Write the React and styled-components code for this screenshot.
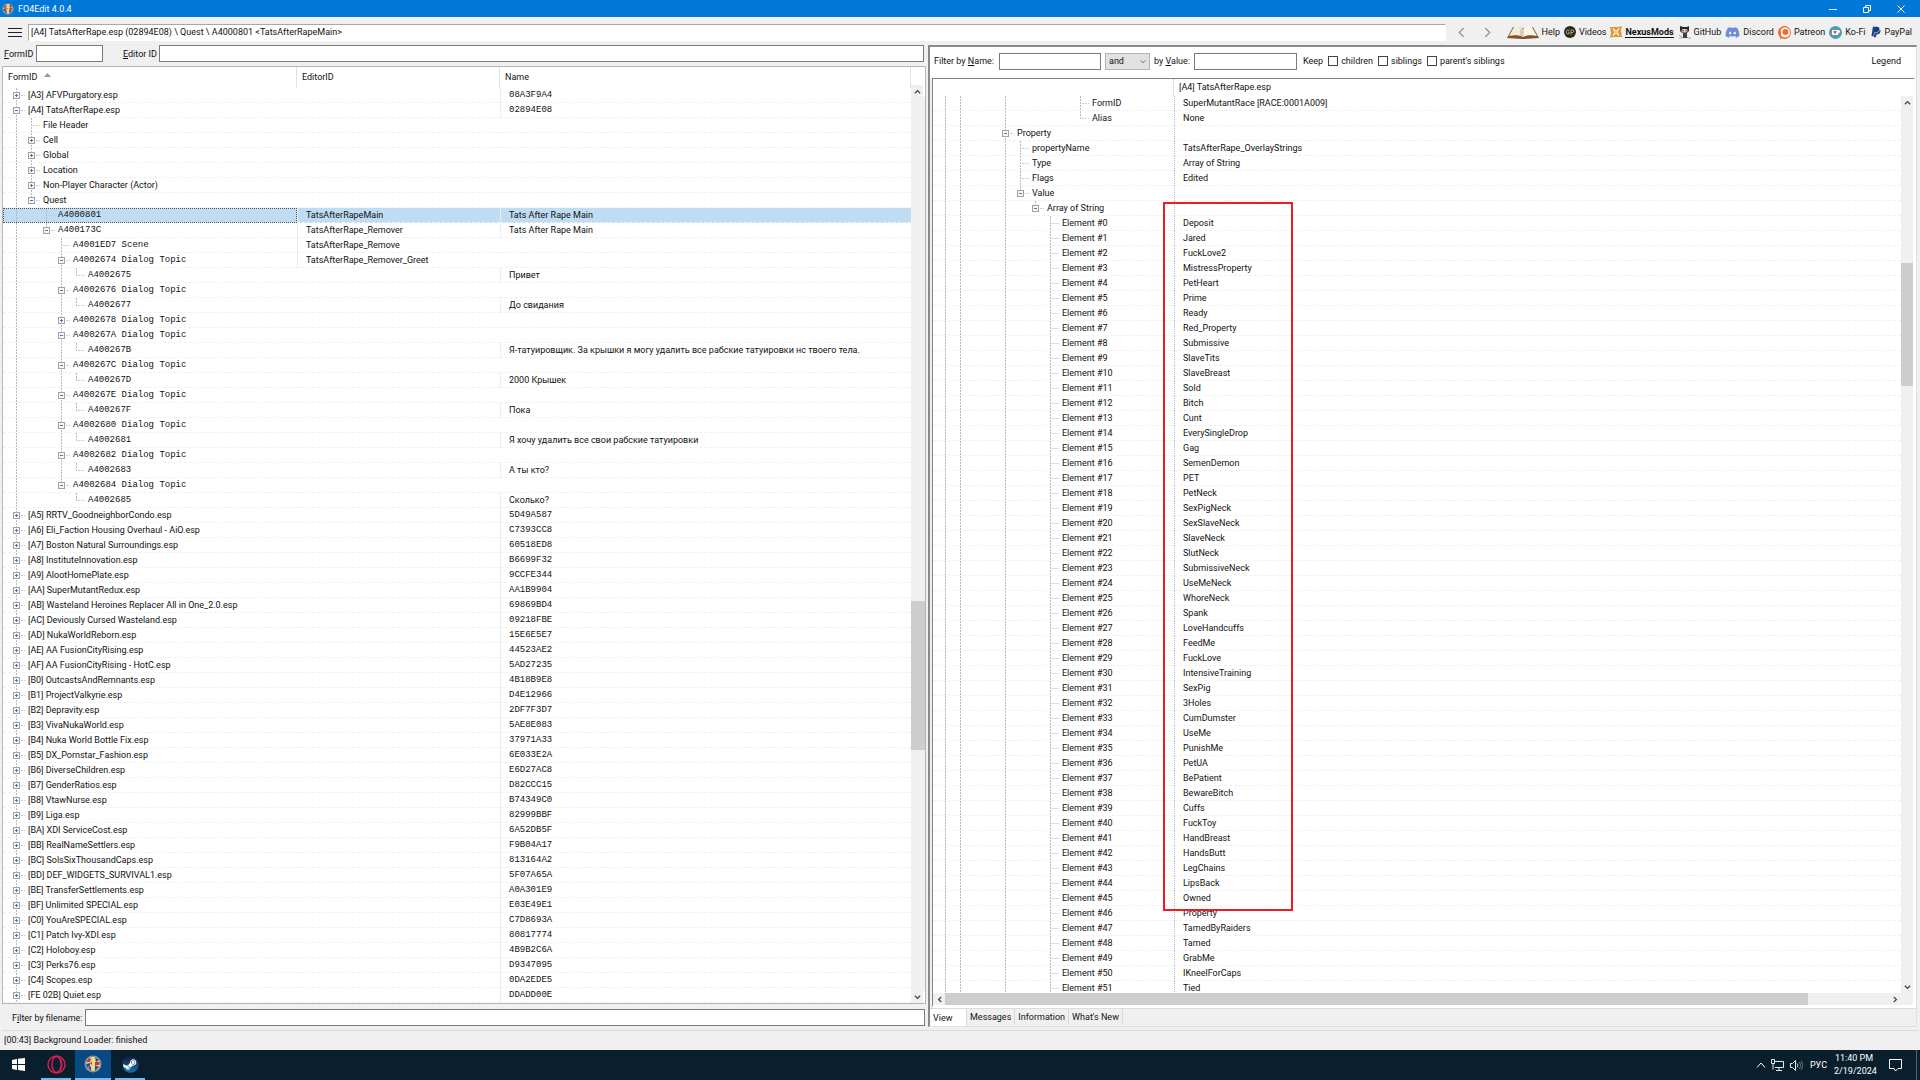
import { useState } from "react";
import styled, { createGlobalStyle } from "styled-components";
import { FaDiscord, FaPaypal, FaSteam } from "react-icons/fa";

const GlobalStyle = createGlobalStyle`
    * {
        box-sizing: border-box;
    }
    body {
        margin: 0;
        overflow: hidden;
        background: #f0f0f0;
        color: #111;
        font: 9px/14px Roboto, "Noto Sans", sans-serif;
    }
    button, input, select {
        font: inherit;
        color: inherit;
    }
    button {
        padding: 0;
        border: none;
        background: none;
    }
    svg {
        display: block;
        flex: none;
    }
`;

const Window = styled.div`
    height: 100vh;
    display: flex;
    flex-direction: column;
    background: #f0f0f0;
`;
const TitleBar = styled.header`
    display: flex;
    align-items: center;
    height: 17px;
    padding: 0 15px 0 2px;
    gap: 4px;
    background: #0078d7;
    color: #fff;
`;
const Title = styled.h1`
    flex: 1;
    margin: 0;
    font-size: 9px;
    font-weight: 400;
`;
const WindowButtons = styled.div`
    display: flex;
    gap: 26px;
`;
const Toolbar = styled.div`
    display: flex;
    align-items: center;
    height: 26px;
    padding: 4px 8px 0 8px;
`;
const PathInput = styled.input`
    flex: 1;
    min-width: 0;
    height: 17px;
    margin-left: 6px;
    padding: 0 2px;
    border: 1px solid #fff;
    border-top-color: #a8a8a8;
    border-left-color: #a8a8a8;
    background: #fff;
`;
const NavButtons = styled.div`
    display: flex;
    gap: 17px;
    padding: 0 15px 0 11px;
`;
const Links = styled.nav`
    display: flex;
    align-items: center;
    gap: 4px;
`;
const ToolLink = styled.a`
    display: flex;
    align-items: center;
    gap: 3px;
    color: #111;
    text-decoration: none;
    font-weight: ${props => (props.$current ? 700 : 400)};

    span {
        border-bottom: 1px solid ${props => (props.$current ? "#111" : "transparent")};
        line-height: 10px;
    }
`;

const Main = styled.main`
    flex: 1;
    min-height: 0;
    display: grid;
    grid-template-columns: 928fr 992fr;
`;
const LeftPane = styled.section`
    display: flex;
    flex-direction: column;
    min-width: 0;
    min-height: 0;
    padding: 2px 2px 0;
`;
const RightPane = styled.section`
    display: flex;
    flex-direction: column;
    min-width: 0;
    min-height: 0;
    margin: 2px 3px 3px 0;
    border: 1px solid #e0e0e0;
    border-top: 2px solid #8a8a8a;
    border-left: 2px solid #8a8a8a;
`;
const IdRow = styled.div`
    display: flex;
    align-items: center;
    height: 17px;
    margin-bottom: 4px;
    padding: 0 2px;
`;
const FieldLabel = styled.label`
    flex: none;
    width: ${props => props.$width}px;
    white-space: nowrap;
`;
const TextInput = styled.input`
    width: ${props => props.$width ? props.$width + "px" : "auto"};
    flex: ${props => (props.$width ? "none" : 1)};
    min-width: 0;
    height: 17px;
    margin-right: ${props => props.$after || 0}px;
    padding: 0 3px;
    border: 1px solid #7a7a7a;
    background: #fff;
`;
const FilenameRow = styled.div`
    display: flex;
    align-items: center;
    padding: 5px 1px 4px 10px;
`;
const FilterRow = styled.div`
    display: flex;
    align-items: center;
    height: 31px;
    padding: 0 15px 3px 4px;
    background: #fff;
`;
const Select = styled.select`
    width: 45px;
    height: 17px;
    margin-right: 4px;
    padding: 0 3px;
    border: 1px solid #b4b4b4;
    background: #e1e1e1;
    appearance: none;
`;
const SelectBox = styled.div`
    position: relative;

    svg {
        position: absolute;
        right: 8px;
        top: 6px;
        pointer-events: none;
    }
`;
const CheckLabel = styled.label`
    display: flex;
    align-items: center;
    gap: 3px;
    margin-left: 5px;
`;
const Check = styled.input`
    appearance: none;
    width: 10px;
    height: 10px;
    margin: 0;
    border: 1px solid #444;
    background: #fff;
`;
const Legend = styled.button`
    margin-left: auto;
`;

const GridBox = styled.div`
    flex: 1;
    min-height: 0;
    display: flex;
    background: #fff;
    border: 1px solid #b4b6be;
`;
const ViewBox = styled.div`
    flex: 1;
    min-height: 0;
    display: flex;
    flex-direction: column;
    margin-left: 2px;
    border-top: 1px solid #828282;
    border-left: 1px solid #828282;
    border-right: 3px solid #fff;
    border-bottom: 3px solid #fff;
    background: #fff;
`;
const ViewBody = styled.div`
    flex: 1;
    min-height: 0;
    display: flex;
`;
const TableWrap = styled.div`
    position: relative;
    flex: 1;
    min-width: 0;
    overflow: hidden;
`;
const Table = styled.table`
    width: 100%;
    table-layout: fixed;
    border-spacing: 0;
`;
const HeadCell = styled.th`
    height: ${props => props.$height}px;
    width: ${props => props.$width ? props.$width + "px" : "auto"};
    padding: 0 5px 1px;
    border-right: 1px ${props => props.$line || "solid #e2e2e2"};
    font-weight: 400;
    text-align: left;

    svg {
        display: inline-block;
        margin: 0 0 3px 7px;
    }
`;
const Row = styled.tr`
    background: ${props => (props.$selected ? "#bfdcf3" : "transparent")};
`;
const Cell = styled.td`
    height: 15px;
    padding: 0 0 0 8px;
    border-bottom: 1px dashed #f1f1f1;
    border-left: 1px ${props => props.$line || "solid transparent"};
    line-height: 14px;
    white-space: nowrap;
    overflow: hidden;
    font-family: ${props => (props.$mono ? '"Liberation Mono", monospace' : "inherit")};
`;
const TreeCell = styled.td`
    height: 15px;
    padding: 0 0 0 ${props => props.$pad}px;
    border-bottom: 1px dashed #f1f1f1;
    outline: ${props => (props.$selected ? "1px dotted #555" : "none")};
    outline-offset: -1px;
`;
const TreeLine = styled.div`
    display: flex;
    height: 14px;
    line-height: 14px;
    white-space: nowrap;
    font-family: ${props => (props.$mono ? '"Liberation Mono", monospace' : "inherit")};
`;
const TreeText = styled.span`
    padding-left: 4px;
`;
const ScrollV = styled.div`
    flex: none;
    width: ${props => props.$width}px;
    display: flex;
    flex-direction: column;
    padding-top: ${props => props.$top}px;
`;
const ScrollH = styled.div`
    flex: none;
    display: flex;
    height: 12px;
`;
const Track = styled.div`
    flex: ${props => props.$size} 1 0;
    background: ${props => (props.$thumb ? "#cdcdcd" : "#f0f0f0")};
`;
const Arrow = styled.button`
    flex: none;
    display: grid;
    place-items: center;
    width: 12px;
    height: 12px;
    background: #f0f0f0;
`;
const Highlight = styled.div`
    position: absolute;
    left: 230px;
    top: 123px;
    width: 130px;
    height: 709px;
    border: 2px solid #ed1c24;
`;

const Tabs = styled.div`
    display: flex;
    height: 18px;
    border-top: 1px solid #dcdcdc;
`;
const Tab = styled.button`
    height: ${props => (props.$active ? 17 : 15)}px;
    padding: 0 3px;
    min-width: ${props => props.$width}px;
    text-align: left;
    background: ${props => (props.$active ? "#fff" : "#f0f0f0")};
    border-right: 1px solid #d9d9d9;
`;
const Status = styled.footer`
    height: 20px;
    margin: 0 2px;
    padding: 2px;
    border-top: 1px solid #dadada;
`;

const Taskbar = styled.div`
    display: flex;
    height: 30px;
    background: #0a1f2d;
    color: #fff;
`;
const TaskButton = styled.button`
    display: grid;
    place-items: center;
    width: ${props => props.$width}px;
    margin-right: 4px;
    background: ${props => (props.$active ? "#084a85" : "transparent")};
    border-bottom: 2px solid ${props => (props.$open ? "#76b9ed" : "transparent")};
`;
const Tray = styled.div`
    display: flex;
    align-items: center;
    margin-left: auto;
    gap: 5px;
    padding-right: 5px;
    border-right: 1px solid #56646e;
    margin-right: 3px;
`;
const Clock = styled.time`
    width: 40px;
    text-align: center;
    white-space: nowrap;
    line-height: 13px;
`;
const Language = styled.span`
    margin: 0 2px;
`;
const TrayButton = styled.button`
    display: grid;
    place-items: center;
    width: 32px;
    height: 28px;
`;

// level, label, editor id, name, state: "+" collapsed, "-" expanded
const records = [
    [0, "[A3] AFVPurgatory.esp", "", "08A3F9A4", "+"],
    [0, "[A4] TatsAfterRape.esp", "", "02894E08", "-"],
    [1, "File Header"],
    [1, "Cell", "", "", "+"],
    [1, "Global", "", "", "+"],
    [1, "Location", "", "", "+"],
    [1, "Non-Player Character (Actor)", "", "", "+"],
    [1, "Quest", "", "", "-"],
    [2, "A4000801", "TatsAfterRapeMain", "Tats After Rape Main"],
    [2, "A400173C", "TatsAfterRape_Remover", "Tats After Rape Main", "-"],
    [3, "A4001ED7 Scene", "TatsAfterRape_Remove"],
    [3, "A4002674 Dialog Topic", "TatsAfterRape_Remover_Greet", "", "-"],
    [4, "A4002675", "", "Привет"],
    [3, "A4002676 Dialog Topic", "", "", "-"],
    [4, "A4002677", "", "До свидания"],
    [3, "A4002678 Dialog Topic", "", "", "+"],
    [3, "A400267A Dialog Topic", "", "", "-"],
    [4, "A400267B", "", "Я-татуировщик. За крышки я могу удалить все рабские татуировки нс твоего тела."],
    [3, "A400267C Dialog Topic", "", "", "-"],
    [4, "A400267D", "", "2000 Крышек"],
    [3, "A400267E Dialog Topic", "", "", "-"],
    [4, "A400267F", "", "Пока"],
    [3, "A4002680 Dialog Topic", "", "", "-"],
    [4, "A4002681", "", "Я хочу удалить все свои рабские татуировки"],
    [3, "A4002682 Dialog Topic", "", "", "-"],
    [4, "A4002683", "", "А ты кто?"],
    [3, "A4002684 Dialog Topic", "", "", "-"],
    [4, "A4002685", "", "Сколько?"],
    [0, "[A5] RRTV_GoodneighborCondo.esp", "", "5D49A587", "+"],
    [0, "[A6] Eli_Faction Housing Overhaul - AiO.esp", "", "C7393CC8", "+"],
    [0, "[A7] Boston Natural Surroundings.esp", "", "60518ED8", "+"],
    [0, "[A8] InstituteInnovation.esp", "", "B6699F32", "+"],
    [0, "[A9] AlootHomePlate.esp", "", "9CCFE344", "+"],
    [0, "[AA] SuperMutantRedux.esp", "", "AA1B9904", "+"],
    [0, "[AB] Wasteland Heroines Replacer All in One_2.0.esp", "", "69869BD4", "+"],
    [0, "[AC] Deviously Cursed Wasteland.esp", "", "09218FBE", "+"],
    [0, "[AD] NukaWorldReborn.esp", "", "15E6E5E7", "+"],
    [0, "[AE] AA FusionCityRising.esp", "", "44523AE2", "+"],
    [0, "[AF] AA FusionCityRising - HotC.esp", "", "5AD27235", "+"],
    [0, "[B0] OutcastsAndRemnants.esp", "", "4B18B9E8", "+"],
    [0, "[B1] ProjectValkyrie.esp", "", "D4E12966", "+"],
    [0, "[B2] Depravity.esp", "", "2DF7F3D7", "+"],
    [0, "[B3] VivaNukaWorld.esp", "", "5AE8E083", "+"],
    [0, "[B4] Nuka World Bottle Fix.esp", "", "37971A33", "+"],
    [0, "[B5] DX_Pornstar_Fashion.esp", "", "6E033E2A", "+"],
    [0, "[B6] DiverseChildren.esp", "", "E6D27AC8", "+"],
    [0, "[B7] GenderRatios.esp", "", "D82CCC15", "+"],
    [0, "[B8] VtawNurse.esp", "", "B74349C0", "+"],
    [0, "[B9] Liga.esp", "", "82999BBF", "+"],
    [0, "[BA] XDI ServiceCost.esp", "", "6A52DB5F", "+"],
    [0, "[BB] RealNameSettlers.esp", "", "F9B04A17", "+"],
    [0, "[BC] SolsSixThousandCaps.esp", "", "813164A2", "+"],
    [0, "[BD] DEF_WIDGETS_SURVIVAL1.esp", "", "5F07A65A", "+"],
    [0, "[BE] TransferSettlements.esp", "", "A0A301E9", "+"],
    [0, "[BF] Unlimited SPECIAL.esp", "", "E03E49E1", "+"],
    [0, "[C0] YouAreSPECIAL.esp", "", "C7D8693A", "+"],
    [0, "[C1] Patch Ivy-XDI.esp", "", "80817774", "+"],
    [0, "[C2] Holoboy.esp", "", "4B9B2C6A", "+"],
    [0, "[C3] Perks76.esp", "", "D9347095", "+"],
    [0, "[C4] Scopes.esp", "", "0DA2EDE5", "+"],
    [0, "[FE 02B] Quiet.esp", "", "DDADD00E", "+"],
];

const strings = [
    "Deposit", "Jared", "FuckLove2", "MistressProperty", "PetHeart", "Prime", "Ready",
    "Red_Property", "Submissive", "SlaveTits", "SlaveBreast", "Sold", "Bitch", "Cunt",
    "EverySingleDrop", "Gag", "SemenDemon", "PET", "PetNeck", "SexPigNeck", "SexSlaveNeck",
    "SlaveNeck", "SlutNeck", "SubmissiveNeck", "UseMeNeck", "WhoreNeck", "Spank",
    "LoveHandcuffs", "FeedMe", "FuckLove", "IntensiveTraining", "SexPig", "3Holes",
    "CumDumster", "UseMe", "PunishMe", "PetUA", "BePatient", "BewareBitch", "Cuffs",
    "FuckToy", "HandBreast", "HandsButt", "LegChains", "LipsBack", "Owned", "Property",
    "TamedByRaiders", "Tamed", "GrabMe", "IKneelForCaps", "Tied",
];

const fields = [
    [9, "FormID", "SuperMutantRace [RACE:0001A009]"],
    [9, "Alias", "None"],
    [4, "Property", "", "-"],
    [5, "propertyName", "TatsAfterRape_OverlayStrings"],
    [5, "Type", "Array of String"],
    [5, "Flags", "Edited"],
    [5, "Value", "", "-"],
    [6, "Array of String", "", "-"],
    ...strings.map((text, i) => [7, "Element #" + i, text]),
];

// true when the branch at this level goes on below row i
const continues = (rows, i, level, open) => {
    for (let j = i + 1; j < rows.length; j++) {
        if (rows[j][0] === level) return true;
        if (rows[j][0] < level) return false;
    }
    return open.includes(level);
};

const Guides = ({ rows, index, open, state }) => {
    const level = rows[index][0];
    const x = level * 15 + 7;
    const lines = [];
    for (let l = 0; l < level; l++) {
        if (continues(rows, index, l, open)) lines.push(l * 15 + 7);
    }
    const end = continues(rows, index, level, open) ? 15 : 8;
    return (
        <svg width={level * 15 + 15} height="15" overflow="visible" fill="none" stroke="#b8b8b8" shapeRendering="crispEdges">
            {lines.map(l => <path key={l} strokeDasharray="2 1" d={`M${l + 0.5} 0V15`} />)}
            <path strokeDasharray="2 1" d={`M${x + 0.5} 0V${end}`} />
            <path strokeDasharray="2 1" d={`M${x + 2} 7.5H${x + 9}`} stroke="#ccc" />
            {state && <rect x={x - 2.5} y="4.5" width="6" height="6" fill="#f6f7fa" stroke="#a2a2a2" />}
            {state && <path stroke="#5a72ac" d={`M${x - 1} 7.5H${x + 2}`} />}
            {state === "+" && <path stroke="#5a72ac" d={`M${x + 0.5} 6V9`} />}
        </svg>
    );
};

const Chevron = ({ d, size = 7, color = "#444", width = 1.5 }) => (
    <svg width={size} height={size} viewBox="0 0 8 8" fill="none" stroke={color} strokeWidth={width}>
        <path d={d} />
    </svg>
);
const UP = "M1 6L4 3L7 6";
const DOWN = "M1 2L4 5L7 2";
const LEFT = "M6 1L3 4L6 7";
const RIGHT = "M2 1L5 4L2 7";

const AppIcon = ({ size }) => (
    <svg width={size} height={size} viewBox="0 0 18 18">
        <circle cx="9" cy="9" r="8.5" fill="#8c9093" />
        <circle cx="9" cy="9" r="7" fill="#d8cfc0" />
        <path d="M2 7l3-4 2 1-1 3zM11 7h5l-1 3h-4z" fill="#c8372d" />
        <path d="M2 9l4-1v3l-3 2zM11 2l4 3-3 2z" fill="#2f4f80" />
        <path d="M8 2h3v5l-1 3 1 5H8l-1-5z" fill="#f0dc7c" />
        <path d="M4 13l3-2v5zM11 10l4 2-4 4z" fill="#34507c" />
        <path d="M6 8l2-1v3zM12 11l3 1-3 1z" fill="#b8352d" />
    </svg>
);
const BookIcon = () => (
    <svg width="32" height="13" viewBox="0 0 32 13">
        <path d="M0 12L6 1l10 1 10-1 6 11-15 1h-2z" fill="#80502f" />
        <path d="M2 10L7 1c4-1 7 0 9 2v8c-4-2-9-2-14-1z" fill="#f4ead8" />
        <path d="M30 10L25 1c-4-1-7 0-9 2v8c4-2 9-2 14-1z" fill="#fbf5ea" />
        <path d="M16 3v8M14 3v7" stroke="#c8b192" fill="none" />
    </svg>
);
const GpIcon = () => (
    <svg width="12" height="12" viewBox="0 0 12 12">
        <circle cx="6" cy="6" r="6" fill="#2c2620" />
        <path d="M5.500 4H3L2 6l1 2h2V6H4M7 9V4h2l1 1-1 1.500H7" fill="none" stroke="#b09b72" />
    </svg>
);
const NexusIcon = () => (
    <svg width="12" height="12" viewBox="0 0 12 12">
        <path d="M0 1l3 0 5 0 4-1-1 4 1 7-4 0-5 0-3 1 1-5z" fill="#e2953f" />
        <path d="M3 2l2 4-2 4M9 2L7 6l2 4M3 3l3 2 3-2M3 9l3-2 3 2" stroke="#fff3df" fill="none" />
    </svg>
);
const OctocatIcon = () => (
    <svg width="13" height="13" viewBox="0 0 13 13">
        <path d="M2 0l3 1h4l2-1v5L9 7H4L2 5z" fill="#24292e" />
        <rect x="3.500" y="3" width="6" height="3.500" rx="1.500" fill="#f1c8b0" />
        <path d="M5 7h4v4l1 1H4l1-1z" fill="#3a4147" />
        <path d="M1 9l3 2M1 12h3M10 12h3" stroke="#8bb9cd" />
        <path d="M5 4v1.500M8 4v1.500" stroke="#532" />
    </svg>
);
const PatreonIcon = () => (
    <svg width="13" height="13" viewBox="0 0 13 13">
        <circle cx="6.500" cy="6.500" r="6.500" fill="#f26a2a" />
        <circle cx="7" cy="6.500" r="5" fill="#fff" />
        <circle cx="7.500" cy="6" r="3" fill="#f26a2a" />
        <path d="M2.500 4.500V13" stroke="#f26a2a" />
    </svg>
);
const KofiIcon = () => (
    <svg width="13" height="13" viewBox="0 0 13 13">
        <circle cx="6.500" cy="6.500" r="6.500" fill="#519ab5" />
        <path d="M3 4h6.500c2 0 2 3 0 3L9 9H3.500L3 8z" fill="#fff" />
        <path d="M6 8L4.200 6c0-1.500 1.500-1.500 1.800-.5.300-1 1.800-1 1.800.5z" fill="#e8504f" />
    </svg>
);
const OperaIcon = () => (
    <svg width="19" height="19" viewBox="0 0 19 19" fill="none" stroke="#dc1f4c">
        <circle cx="9.500" cy="9.500" r="8.500" strokeWidth="1.400" />
        <ellipse cx="9.500" cy="9.500" rx="4.500" ry="8" strokeWidth="1.400" />
        <path d="M10 1.500c7 3 7 13 0 16" />
    </svg>
);

const links = [
    ["Help", <BookIcon />],
    ["Videos", <GpIcon />],
    ["NexusMods", <NexusIcon />],
    ["GitHub", <OctocatIcon />],
    ["Discord", <FaDiscord size={15} color="#7289da" />],
    ["Patreon", <PatreonIcon />],
    ["Ko-Fi", <KofiIcon />],
    ["PayPal", <FaPaypal size={12} color="#173f86" />],
];

const isHex = text => /^[0-9A-F]{8}(?= |$)/.test(text);

const NavTree = () => {
    const [selected, setSelected] = useState(8);
    return (
        <GridBox>
            <TableWrap>
                <Table>
                    <thead>
                        <tr>
                            <HeadCell $height={21} $width={294}>
                                FormID
                                <svg width="7" height="4" viewBox="0 0 7 4"><path d="M0 4l3.500-4L7 4z" fill="#999" /></svg>
                            </HeadCell>
                            <HeadCell $height={21} $width={203}>EditorID</HeadCell>
                            <HeadCell $height={21}>Name</HeadCell>
                        </tr>
                    </thead>
                    <tbody>
                        {records.map(([, label, editor, name, state], i) => (
                            <Row key={i} $selected={i === selected} onClick={() => setSelected(i)}>
                                <TreeCell $pad={6} $selected={i === selected}>
                                    <TreeLine $mono={isHex(label)}>
                                        <Guides rows={records} index={i} open={[0]} state={state} />
                                        <TreeText>{label}</TreeText>
                                    </TreeLine>
                                </TreeCell>
                                <Cell $line={editor && "solid #ececec"}>{editor}</Cell>
                                <Cell $line={name && "solid #ececec"} $mono={isHex(name || "")}>{name}</Cell>
                            </Row>
                        ))}
                    </tbody>
                </Table>
            </TableWrap>
            <ScrollV $width={14} $top={18}>
                <Arrow aria-label="Scroll up"><Chevron d={UP} /></Arrow>
                <Track $size={503} />
                <Track $size={149} $thumb />
                <Track $size={241} />
                <Arrow aria-label="Scroll down"><Chevron d={DOWN} /></Arrow>
            </ScrollV>
        </GridBox>
    );
};

const RecordView = () => (
    <ViewBox>
        <ViewBody>
            <TableWrap>
                <Table>
                    <thead>
                        <tr>
                            <HeadCell $height={17} $width={241} $line="dotted #c0c0c0" />
                            <HeadCell $height={17} $line="solid transparent">[A4] TatsAfterRape.esp</HeadCell>
                        </tr>
                    </thead>
                    <tbody>
                        {fields.map(([, label, value, state], i) => (
                            <Row key={i}>
                                <TreeCell $pad={5}>
                                    <TreeLine>
                                        <Guides rows={fields} index={i} open={[0, 1, 4, 7]} state={state} />
                                        <TreeText>{label}</TreeText>
                                    </TreeLine>
                                </TreeCell>
                                <Cell $line="dotted #b8b8b8">{value}</Cell>
                            </Row>
                        ))}
                    </tbody>
                </Table>
                <Highlight />
            </TableWrap>
            <ScrollV $width={12} $top={17}>
                <Arrow aria-label="Scroll up"><Chevron d={UP} /></Arrow>
                <Track $size={155} />
                <Track $size={123} $thumb />
                <Track $size={594} />
                <Arrow aria-label="Scroll down"><Chevron d={DOWN} /></Arrow>
            </ScrollV>
        </ViewBody>
        <ScrollH>
            <Arrow aria-label="Scroll left"><Chevron d={LEFT} /></Arrow>
            <Track $size={861} $thumb />
            <Track $size={81} />
            <Arrow aria-label="Scroll right"><Chevron d={RIGHT} /></Arrow>
            <Arrow as="span" />
        </ScrollH>
    </ViewBox>
);

const App = () => {
    const [tab, setTab] = useState("View");
    return (
        <>
            <GlobalStyle />
            <Window>
                <TitleBar>
                    <AppIcon size={12} />
                    <Title>FO4Edit 4.0.4</Title>
                    <WindowButtons>
                        <button aria-label="Minimize">
                            <svg width="8" height="8" stroke="#fff"><path d="M0 4.500h8" /></svg>
                        </button>
                        <button aria-label="Restore">
                            <svg width="8" height="8" stroke="#fff" fill="none"><path d="M.5 2.500h5v5h-5zM2.500 2.500v-2h5v5h-2" /></svg>
                        </button>
                        <button aria-label="Close">
                            <svg width="8" height="8" stroke="#fff"><path d="M.5.5l7 7M7.500.5l-7 7" /></svg>
                        </button>
                    </WindowButtons>
                </TitleBar>
                <Toolbar>
                    <button aria-label="Menu">
                        <svg width="14" height="9" stroke="#222"><path d="M0 .5h14M0 4.500h14M0 8.500h14" /></svg>
                    </button>
                    <PathInput aria-label="Path" readOnly value="[A4] TatsAfterRape.esp (02894E08) \ Quest \ A4000801 <TatsAfterRapeMain>" />
                    <NavButtons>
                        <button aria-label="Back"><Chevron d="M6 0L2 4L6 8" size={9} color="#8a8a94" width={1} /></button>
                        <button aria-label="Forward"><Chevron d="M2 0L6 4L2 8" size={9} color="#8a8a94" width={1} /></button>
                    </NavButtons>
                    <Links>
                        {links.map(([text, icon]) => (
                            <ToolLink key={text} href="#" $current={text === "NexusMods"}>
                                {icon}
                                <span>{text}</span>
                            </ToolLink>
                        ))}
                    </Links>
                </Toolbar>
                <Main>
                    <LeftPane>
                        <IdRow>
                            <FieldLabel htmlFor="formid" $width={32}><u>F</u>ormID</FieldLabel>
                            <TextInput id="formid" $width={67} $after={20} />
                            <FieldLabel htmlFor="editorid" $width={36}><u>E</u>ditor ID</FieldLabel>
                            <TextInput id="editorid" />
                        </IdRow>
                        <NavTree />
                        <FilenameRow>
                            <FieldLabel htmlFor="filename" $width={73}>F<u>i</u>lter by filename:</FieldLabel>
                            <TextInput id="filename" />
                        </FilenameRow>
                    </LeftPane>
                    <RightPane>
                        <FilterRow>
                            <FieldLabel htmlFor="byname" $width={65}>Filter by <u>N</u>ame:</FieldLabel>
                            <TextInput id="byname" $width={102} $after={4} />
                            <SelectBox>
                                <Select aria-label="Operator" defaultValue="and">
                                    <option>and</option>
                                    <option>or</option>
                                </Select>
                                <Chevron d={DOWN} size={6} width={1} />
                            </SelectBox>
                            <FieldLabel htmlFor="byvalue" $width={40}>by <u>V</u>alue:</FieldLabel>
                            <TextInput id="byvalue" $width={103} $after={6} />
                            <span>Keep</span>
                            <CheckLabel><Check type="checkbox" />children</CheckLabel>
                            <CheckLabel><Check type="checkbox" />siblings</CheckLabel>
                            <CheckLabel><Check type="checkbox" />parent's siblings</CheckLabel>
                            <Legend>Legend</Legend>
                        </FilterRow>
                        <RecordView />
                        <Tabs role="tablist">
                            {[["View", 37], ["Messages", 45], ["Information", 52], ["What's New", 54]].map(([name, width]) => (
                                <Tab key={name} role="tab" aria-selected={tab === name} $active={tab === name} $width={width} onClick={() => setTab(name)}>
                                    {name}
                                </Tab>
                            ))}
                        </Tabs>
                    </RightPane>
                </Main>
                <Status>[00:43] Background Loader: finished</Status>
                <Taskbar>
                    <TaskButton $width={37} aria-label="Start">
                        <svg width="13" height="13" fill="#fff"><path d="M0 2l5-1v5H0zM6 .8L13 0v6H6zM0 7h5v5l-5-1zM6 7h7v6l-7-1z" /></svg>
                    </TaskButton>
                    <TaskButton $width={30} $open aria-label="Opera"><OperaIcon /></TaskButton>
                    <TaskButton $width={36} $open $active aria-label="FO4Edit"><AppIcon size={18} /></TaskButton>
                    <TaskButton $width={30} $open aria-label="Steam">
                        <svg width="17" height="17" viewBox="0 0 17 17">
                            <defs>
                                <linearGradient id="steam" x2="0" y2="1">
                                    <stop offset="0" stopColor="#101a3a" />
                                    <stop offset="1" stopColor="#1273b4" />
                                </linearGradient>
                            </defs>
                            <circle cx="8.500" cy="8.500" r="7.500" fill="#fff" />
                            <FaSteam size={17} fill="url(#steam)" />
                        </svg>
                    </TaskButton>
                    <Tray>
                        <svg width="10" height="6" fill="none" stroke="#fff"><path d="M1 5.500l4-4.500 4 4.500" /></svg>
                        <svg width="14" height="12" fill="none" stroke="#e8e8e8"><path d="M4 2.500h8.500v6H4M.5.5h3v4h-3zM2 5v5.500M8 9v2M5 11.500h6" /></svg>
                        <svg width="13" height="11" fill="none" stroke="#e8e8e8"><path d="M.5 3.500h2l3-3v10l-3-3h-2zM7 3.500c1 1 1 3 0 4" /><path d="M9 2c2 2 2 5 0 7M11 1c2 3 2 6 0 9" stroke="#71808a" /></svg>
                        <Language>РУС</Language>
                        <Clock>11:40 PM<br />2/19/2024</Clock>
                        <TrayButton aria-label="Notifications">
                            <svg width="13" height="13" fill="none" stroke="#fff"><path d="M.5.500h12v9H9L6.500 12 5 9.500H.5z" /></svg>
                        </TrayButton>
                    </Tray>
                </Taskbar>
            </Window>
        </>
    );
};

export default App;
